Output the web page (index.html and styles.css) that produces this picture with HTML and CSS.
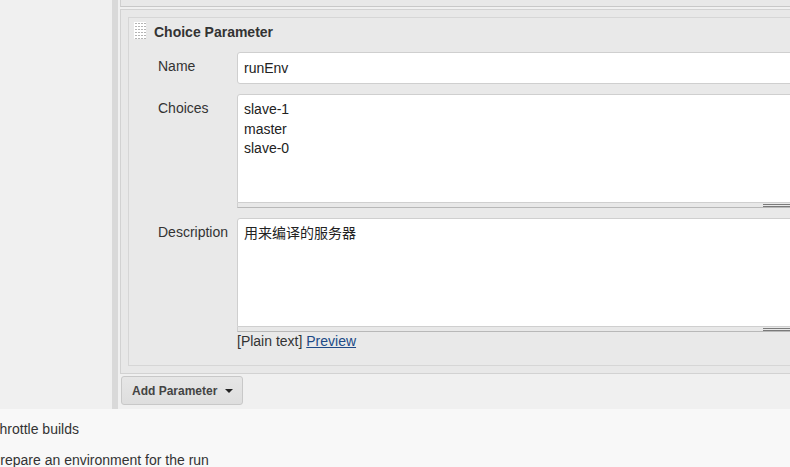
FILE: index.html
```html
<!DOCTYPE html>
<html>
<head>
<meta charset="utf-8">
<link rel="stylesheet" href="styles.css">
</head>
<body>
<div class="main">
  <div class="gutter"></div>
  <div class="bar"></div>
  <div class="content">
    <div class="prev"></div>
    <div class="outer">
      <div class="inner">
        <div class="header">
          <svg class="handle" width="12" height="17" viewBox="0 0 12 17">
            <rect width="12" height="17" fill="#fff"/>
            <g fill="#b4b4b4">
              <rect x="1" y="1" width="2" height="1"/><rect x="4" y="1" width="2" height="1"/><rect x="7" y="1" width="2" height="1"/><rect x="10" y="1" width="2" height="1"/>
              <rect x="1" y="4" width="2" height="1"/><rect x="4" y="4" width="2" height="1"/><rect x="7" y="4" width="2" height="1"/><rect x="10" y="4" width="2" height="1"/>
              <rect x="1" y="7" width="2" height="1"/><rect x="4" y="7" width="2" height="1"/><rect x="7" y="7" width="2" height="1"/><rect x="10" y="7" width="2" height="1"/>
              <rect x="1" y="10" width="2" height="1"/><rect x="4" y="10" width="2" height="1"/><rect x="7" y="10" width="2" height="1"/><rect x="10" y="10" width="2" height="1"/>
              <rect x="1" y="13" width="2" height="1"/><rect x="4" y="13" width="2" height="1"/><rect x="7" y="13" width="2" height="1"/><rect x="10" y="13" width="2" height="1"/>
              <rect x="1" y="16" width="2" height="1"/><rect x="4" y="16" width="2" height="1"/><rect x="7" y="16" width="2" height="1"/><rect x="10" y="16" width="2" height="1"/>
            </g>
          </svg>
          <span class="title">Choice Parameter</span>
        </div>
        <div class="form">
          <div class="label">Name</div>
          <div class="field"><div class="input">runEnv</div></div>

          <div class="label">Choices</div>
          <div class="field">
            <div class="textarea">slave-1<br>master<br>slave-0</div>
            <div class="resize"><span class="grip"></span></div>
          </div>

          <div class="label">Description</div>
          <div class="field">
            <div class="textarea">用来编译的服务器</div>
            <div class="resize"><span class="grip"></span></div>
            <div class="plain">[Plain text] <a href="#" class="link">Preview</a></div>
          </div>
        </div>
      </div>
    </div>
    <div class="actions">
      <button class="btn">Add Parameter <span class="caret"></span></button>
    </div>
  </div>
</div>
<div class="lower">
  <div class="opt">Throttle builds</div>
  <div class="opt">Prepare an environment for the run</div>
</div>
</body>
</html>
```

FILE: styles.css
```css
html, body {
  margin: 0;
  padding: 0;
  overflow: hidden;
}
body {
  width: 790px;
  height: 467px;
  background: #f8f8f8;
  font-family: "Liberation Sans", "Noto Sans CJK SC", Arial, sans-serif;
  font-size: 14px;
  color: #333;
}
.main {
  display: flex;
  width: 840px;
  height: 409px;
  background: #f0f0f0;
}
.gutter {
  width: 112px;
  flex: none;
  background: #f0f0f0;
}
.bar {
  width: 6px;
  flex: none;
  background: #d9d9d9;
}
.content {
  flex: 1;
  padding-left: 2px;
  display: flex;
  flex-direction: column;
}
.prev {
  height: 6px;
  background: #e8e8e8;
  border-left: 1px solid #d0d0d0;
  border-bottom: 1px solid #c8c8c8;
}
.outer {
  margin-top: 2px;
  border: 1px solid #d2d2d2;
  background: #e8e8e8;
  padding: 7px 0 7px 7px;
}
.inner {
  border: 1px solid #d6d6d6;
  background: #e9e9e9;
  padding: 4px 0 16px 5px;
  width: 659px;
}
.header {
  display: flex;
  align-items: center;
  gap: 8px;
  height: 17px;
  margin-bottom: 13px;
}
.handle {
  display: block;
  flex: none;
}
.title {
  font-weight: bold;
  font-size: 14px;
  color: #333;
  padding-top: 2px;
}
.form {
  display: grid;
  grid-template-columns: 79px 1fr;
  row-gap: 10px;
  margin-left: 24px;
}
.label {
  padding-top: 6px;
  line-height: 16px;
  color: #333;
}
.field {
  display: flex;
  flex-direction: column;
}
.input {
  height: 30px;
  line-height: 30px;
  border: 1px solid #cfcfcf;
  border-radius: 3px;
  background: #fff;
  padding: 0 6px;
  color: #222;
}
.textarea {
  height: 102px;
  border: 1px solid #cfcfcf;
  border-radius: 3px 3px 0 0;
  background: #fff;
  padding: 5px 6px 0;
  line-height: 19.5px;
  color: #222;
}
.resize {
  height: 4px;
  background: #e8e8e8;
  border-bottom: 1px solid #b8b8b8;
  border-left: 1px solid #d0d0d0;
  position: relative;
}
.grip {
  position: absolute;
  right: 0;
  top: 1px;
  width: 30px;
  height: 1px;
  border-top: 1px solid #7a7a7a;
  border-bottom: 1px solid #7a7a7a;
}
.plain {
  margin-top: 1px;
  line-height: 16px;
  color: #333;
}
.link {
  color: #204a87;
  text-decoration: underline;
}
.actions {
  padding: 2px 0 0 1px;
}
.btn {
  width: 122px;
  height: 29px;
  border: 1px solid #c8c8c8;
  border-radius: 3px;
  background: linear-gradient(#e6e6e6, #dedede);
  font-family: "Liberation Sans", Arial, sans-serif;
  font-weight: bold;
  font-size: 12px;
  color: #444;
  padding: 0 0 0 10px;
  text-align: left;
  display: flex;
  align-items: center;
}
.caret {
  display: inline-block;
  width: 0;
  height: 0;
  margin-left: 8px;
  border-left: 4px solid transparent;
  border-right: 4px solid transparent;
  border-top: 4px solid #222;
}
.lower {
  padding-top: 12px;
  margin-left: -9px;
}
.opt {
  line-height: 16px;
  margin-bottom: 15px;
  color: #333;
}
```
